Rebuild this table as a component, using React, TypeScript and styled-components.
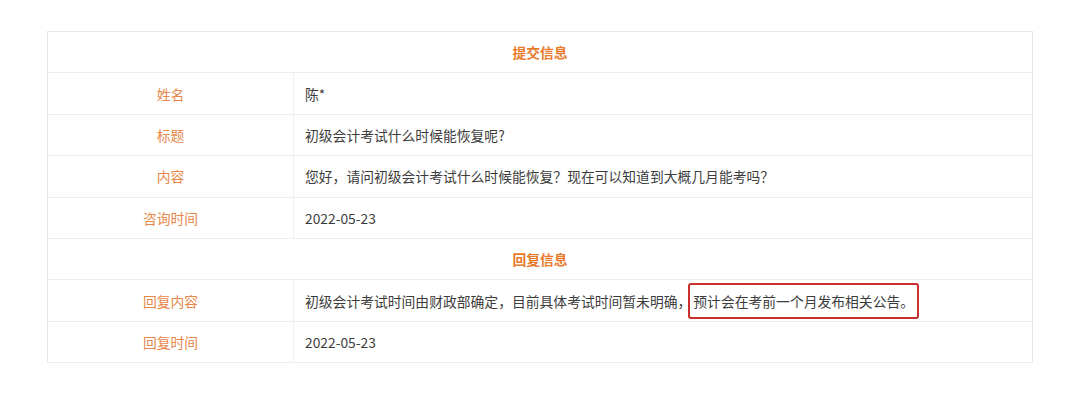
import styled, { createGlobalStyle } from 'styled-components';

type Row = {
  label: string;
  value: string;
  note?: string;
};

type Section = {
  title: string;
  rows: Row[];
};

const sections: Section[] = [
  {
    title: '提交信息',
    rows: [
      { label: '姓名', value: '陈*' },
      { label: '标题', value: '初级会计考试什么时候能恢复呢?' },
      { label: '内容', value: '您好，请问初级会计考试什么时候能恢复？现在可以知道到大概几月能考吗？' },
      { label: '咨询时间', value: '2022-05-23' },
    ],
  },
  {
    title: '回复信息',
    rows: [
      {
        label: '回复内容',
        value: '初级会计考试时间由财政部确定，目前具体考试时间暂未明确，',
        note: '预计会在考前一个月发布相关公告。',
      },
      { label: '回复时间', value: '2022-05-23' },
    ],
  },
];

const App = () => {
  return (
    <>
      <GlobalStyle />
      <Page>
        <InfoTable>
          {sections.map((section) => (
            <div key={section.title}>
              <TitleRow>{section.title}</TitleRow>
              {section.rows.map((row) => (
                <DataRow key={row.label}>
                  <Label>{row.label}</Label>
                  <Value>
                    {row.value}
                    {row.note && <Marked>{row.note}</Marked>}
                  </Value>
                </DataRow>
              ))}
            </div>
          ))}
        </InfoTable>
      </Page>
    </>
  );
};

export default App;

const GlobalStyle = createGlobalStyle`
  body {
    margin: 0;
    background: #ffffff;
    font-family: 'Noto Sans CJK SC', 'Noto Sans', sans-serif;
  }
`;

const Page = styled.main`
  width: 1080px;
  height: 400px;
  padding-top: 31px;
  box-sizing: border-box;
`;

const InfoTable = styled.section`
  width: 986px;
  margin: 0 auto;
  border: 1px solid #e6e6e6;
  border-bottom: none;
  box-sizing: border-box;
`;

const TitleRow = styled.div`
  height: 41.4px;
  box-sizing: border-box;
  border-bottom: 1px solid #eeeeee;
  display: flex;
  align-items: center;
  justify-content: center;
  color: #e87a2c;
  font-size: 13.8px;
  font-weight: 700;
`;

const DataRow = styled.div`
  height: 41.4px;
  box-sizing: border-box;
  border-bottom: 1px solid #eeeeee;
  display: grid;
  grid-template-columns: 246px 1fr;
  font-size: 13.8px;
`;

const Label = styled.div`
  display: flex;
  align-items: center;
  justify-content: center;
  border-right: 1px solid #efefef;
  color: #e8874a;
`;

const Value = styled.div`
  display: flex;
  align-items: center;
  padding-left: 11px;
  color: #3c3c3c;
  white-space: nowrap;
`;

const Marked = styled.span`
  display: inline-flex;
  align-items: center;
  box-sizing: border-box;
  height: 36px;
  margin-left: -3px;
  padding: 0 3px;
  border: 2.5px solid #c9302c;
  border-radius: 3px;
`;
